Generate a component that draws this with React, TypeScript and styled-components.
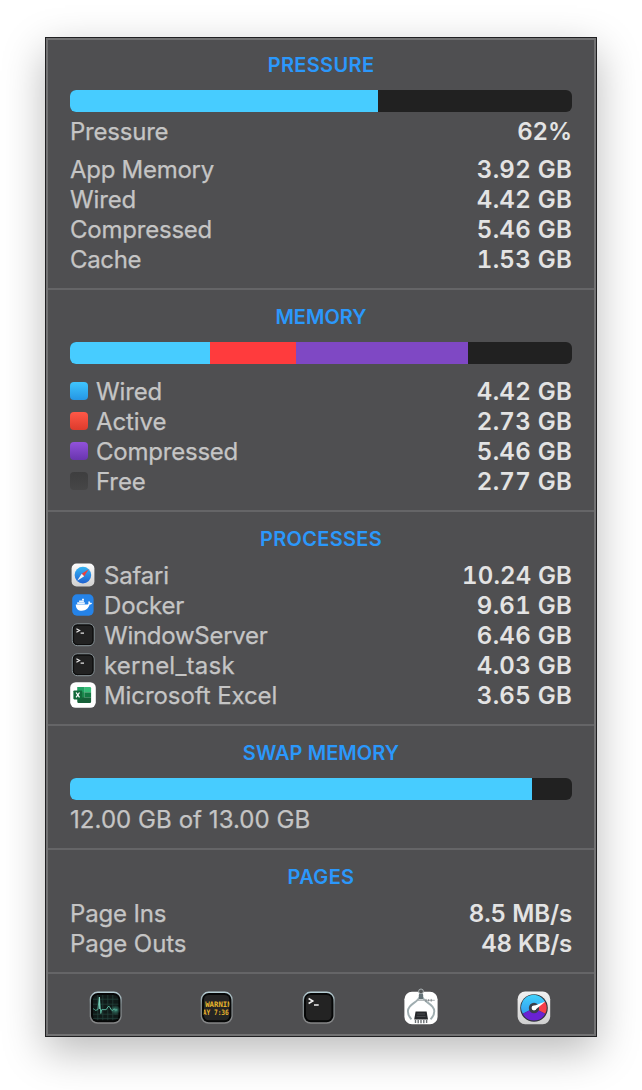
import React from 'react';
import styled, { createGlobalStyle } from 'styled-components';

const GlobalStyle = createGlobalStyle`
  body {
    margin: 0;
    background: #fff;
    font-family: Inter, 'Liberation Sans', sans-serif;
  }
`;

const Page = styled.main`
  box-sizing: border-box;
  width: 642px;
  height: 1090px;
  padding: 37px 45px 53px;
  overflow: hidden;
`;

const Panel = styled.div`
  box-sizing: border-box;
  width: 552px;
  height: 1000px;
  border: 1px solid #202022;
  background: #4f4f51;
  box-shadow: 0 14px 40px rgba(0, 0, 0, 0.28);
`;

const PanelInner = styled.div`
  box-sizing: border-box;
  height: 100%;
  border: 2px solid #727273;
`;

const Section = styled.section<{ $first?: boolean }>`
  padding: ${(p) => (p.$first ? 10 : 12)}px 22px 14px;
  border-bottom: 2px solid #656567;
`;

const Title = styled.h2<{ $tracking: number }>`
  margin: 0;
  font-size: 20px;
  line-height: 30px;
  font-weight: 600;
  letter-spacing: ${(p) => p.$tracking}px;
  text-align: center;
  color: #2b98fb;
`;

const Bar = styled.div<{ $after: number }>`
  display: flex;
  height: 22px;
  margin: 10px 0 ${(p) => p.$after}px;
  border-radius: 6px;
  overflow: hidden;
  background: #212121;
`;

const Segment = styled.div<{ $color: string }>`
  height: 100%;
  background: ${(p) => p.$color};
`;

const Rows = styled.div<{ $before?: number }>`
  margin-top: ${(p) => p.$before ?? 0}px;
`;

const Row = styled.div`
  display: flex;
  align-items: center;
  gap: 8px;
  height: 30px;
  font-size: 24px;
  line-height: 30px;
  white-space: nowrap;
`;

const Label = styled.span<{ $tracking?: number }>`
  flex: 1;
  padding-top: 2px;
  color: #c5c5c5;
  -webkit-text-stroke: 0.25px #c5c5c5;
  letter-spacing: ${(p) => p.$tracking ?? 0}px;
`;

const Value = styled.span<{ $tracking?: number }>`
  padding-top: 2px;
  color: #e3e3e3;
  font-weight: 600;
  font-variant-numeric: tabular-nums;
  letter-spacing: ${(p) => p.$tracking ?? 0.27}px;
`;

const Swatch = styled.i<{ $from: string; $to: string }>`
  width: 18px;
  height: 18px;
  border-radius: 4px;
  background: linear-gradient(${(p) => p.$from}, ${(p) => p.$to});
`;

const Footer = styled.footer`
  display: grid;
  grid-template-columns: 111px 102px 102px 113px 34px;
  padding: 17px 0 0 41px;
`;

const Icon = styled.svg<{ $size: number }>`
  display: block;
  flex: none;
  width: ${(p) => p.$size}px;
  height: ${(p) => p.$size}px;
  overflow: visible;
`;

const SafariIcon = () => (
  <Icon $size={26} viewBox="0 0 26 26">
    <defs>
      <linearGradient id="sfBg" x1="0" y1="0" x2="0" y2="1">
        <stop offset="0" stopColor="#fdfdfd" />
        <stop offset="1" stopColor="#cfcfcf" />
      </linearGradient>
      <linearGradient id="sfDial" x1="0" y1="0" x2="0" y2="1">
        <stop offset="0" stopColor="#35b4f3" />
        <stop offset="1" stopColor="#1f62d2" />
      </linearGradient>
    </defs>
    <rect x="1.6" y="1.6" width="22.8" height="22.8" rx="5" fill="url(#sfBg)" />
    <circle cx="12.9" cy="13.1" r="8.3" fill="url(#sfDial)" />
    <path d="M18.6 7.2 11.7 11.7 14.2 14.3Z" fill="#ee3f3a" />
    <path d="M7.2 18.7 11.7 11.7 14.2 14.3Z" fill="#f4f4f4" />
  </Icon>
);

const DockerIcon = () => (
  <Icon $size={26} viewBox="0 0 26 26">
    <rect x="2.2" y="2.3" width="21.4" height="21.4" rx="4.8" fill="#2583e8" />
    <path
      d="M5.8 12.5H17c1 0 1.5-.5 1.5-1.3-.4-1-.1-1.8.5-2.3.7.5 1 1.2 1 1.9.8-.1 1.5 0 2 .4-.5 1-1.3 1.4-2.4 1.4-1.2 3.9-3.7 6.2-7.8 6.2-3.7 0-6-2.1-6-6.3Z"
      fill="#fff"
    />
    <path d="M7.2 10.2h7.6v2H7.2zM9.1 8.5h4.8v1.4H9.1zM12 6.7h2v1.5h-2z" fill="#e8f3ff" />
  </Icon>
);

const TerminalSmallIcon = () => (
  <Icon $size={26} viewBox="0 0 26 26">
    <rect x="2.3" y="1.9" width="21.8" height="21.8" rx="5" fill="#1f1f1f" stroke="#89959a" strokeWidth="1" />
    <rect x="3.5" y="3.1" width="19.4" height="19.4" rx="4" fill="#222" stroke="#0e0e0e" strokeWidth="1.2" />
    <path d="M6.4 6.8 9.6 8.5 6.4 10.2M10.6 11.2h3.4" fill="none" stroke="#e8e8e8" strokeWidth="1.2" />
  </Icon>
);

const ExcelIcon = () => (
  <Icon $size={26} viewBox="0 0 26 26">
    <rect x="0.2" y="0.2" width="25.6" height="25.6" rx="5.6" fill="#fff" />
    <path d="M7.5 5h6.8v16H8.7a1.2 1.2 0 0 1-1.2-1.2Z" fill="#1d8a4d" />
    <path d="M14.3 5h5.6a1.2 1.2 0 0 1 1.2 1.2v4.1h-6.8Z" fill="#36bd78" />
    <path d="M7.5 5h6.8v5.3H7.5Z" fill="#22a263" />
    <path d="M14.3 10.3h6.8v5.3h-6.8Z" fill="#127a43" />
    <path d="M7.5 15.6h13.6v4.2a1.2 1.2 0 0 1-1.2 1.2H8.7a1.2 1.2 0 0 1-1.2-1.2Z" fill="#176038" />
    <rect x="3.4" y="8.5" width="8.8" height="8.9" rx="0.8" fill="#12693a" />
    <path d="M6.1 10.5l3.4 4.9M9.5 10.5l-3.4 4.9" stroke="#fff" strokeWidth="1.3" />
  </Icon>
);

const DarkTile = ({ fill }: { fill: string }) => (
  <>
    <rect x="0.7" y="0.6" width="32" height="32.2" rx="8" fill="url(#rim)" />
    <rect x="2" y="1.9" width="29.4" height="29.4" rx="6.8" fill="#060707" />
    <rect x="4" y="3.9" width="25.4" height="25.4" rx="4.8" fill={fill} />
  </>
);

const ActivityIcon = () => (
  <Icon $size={34} viewBox="0 0 34 34">
    <defs>
      <linearGradient id="rim" x1="0" y1="0" x2="0" y2="1">
        <stop offset="0" stopColor="#bad2d9" />
        <stop offset="0.4" stopColor="#7e898c" />
        <stop offset="1" stopColor="#858586" />
      </linearGradient>
      <radialGradient id="glow">
        <stop offset="0" stopColor="#4fb99f" stopOpacity="0.7" />
        <stop offset="1" stopColor="#4fb99f" stopOpacity="0" />
      </radialGradient>
    </defs>
    <DarkTile fill="#101a19" />
    <path
      d="M8.8 4v25.2M13.8 4v25.2M18.8 4v25.2M23.8 4v25.2M4 8.2h25.4M4 13.2h25.4M4 23.2h25.4M4 27.4h25.4"
      stroke="#25453f"
      strokeWidth="0.7"
    />
    <circle cx="26.5" cy="19" r="5" fill="url(#glow)" />
    <path
      d="M4.2 17.8c1.3 0 1.3 1.5 2.4 1.5s1.4-.7 2.3-.7L10.4 6l1.4 16.5 .9-3.9 4.5.1 1.8-3 1.2-.4 2.2 3.7 1.1.6 1.4-1.8 1.5 1.1h2"
      fill="none"
      stroke="#56ad97"
      strokeWidth="1"
      strokeLinejoin="round"
    />
    <path d="M10.4 6v12" stroke="#8fe0cc" strokeWidth="0.9" />
  </Icon>
);

const LedText = styled.text`
  font: 700 7.4px 'DejaVu Sans Mono', monospace;
  fill: #e6b42c;
`;

const ConsoleIcon = () => (
  <Icon $size={34} viewBox="0 0 34 34">
    <defs>
      <clipPath id="screen">
        <rect x="3.6" y="3.9" width="26" height="25.4" rx="3" />
      </clipPath>
    </defs>
    <DarkTile fill="#242424" />
    <g clipPath="url(#screen)">
      <LedText x="5.2" y="15.6" textLength="26.4" lengthAdjust="spacingAndGlyphs">WARNIN</LedText>
      <LedText x="2.8" y="24.4" textLength="26" lengthAdjust="spacingAndGlyphs">AY 7:36</LedText>
    </g>
  </Icon>
);

const TerminalIcon = () => (
  <Icon $size={34} viewBox="0 0 34 34">
    <DarkTile fill="#232323" />
    <path d="M6.6 7.5 10.8 10 6.6 12.5M12 14h4.7" fill="none" stroke="#f1f1f1" strokeWidth="1.5" />
  </Icon>
);

const SystemInfoIcon = () => (
  <Icon $size={34} viewBox="0 0 34 34">
    <rect x="0.4" y="0.7" width="33.2" height="32.6" rx="7.6" fill="#fff" />
    <circle cx="17" cy="0.4" r="2.4" fill="#55595a" stroke="#aeb3b5" strokeWidth="1" />
    <path
      d="M15.2 6.5C13.6 12 3.9 12.6 3.9 20.2c0 3.4 1.5 6 3.6 8M18.8 6.5C20.4 12 30.3 12.6 30.3 20.2c0 3.4-1.6 6-3.8 8"
      fill="none"
      stroke="#9fadb0"
      strokeWidth="1.9"
    />
    <path d="M12.5 9.3h18.3" stroke="#a5adb0" strokeWidth="1" />
    <path d="M22 7.9v2.8M24.6 8.2v2.2M27.2 7.9v2.8" stroke="#71777b" strokeWidth="0.8" />
    <rect x="14.8" y="2.8" width="4.4" height="5.4" rx="1.2" fill="#647277" />
    <path d="M11.6 20.6h11l1.4 7.8H10.2Z" fill="#26282b" />
    <path d="M13.2 23h7.8M12.6 25.4h9" stroke="#54575a" strokeWidth="0.8" />
    <path d="M11.5 28.9v3M14.2 28.9v3.4M17 28.9v3.4M19.8 28.9v3.4M22.6 28.9v3" stroke="#6c7174" strokeWidth="1.4" />
  </Icon>
);

const GaugeIcon = () => (
  <Icon $size={34} viewBox="0 0 34 34">
    <defs>
      <linearGradient id="gBg" x1="0" y1="0" x2="0" y2="1">
        <stop offset="0" stopColor="#f2f2f2" />
        <stop offset="1" stopColor="#cfcfcf" />
      </linearGradient>
      <linearGradient id="gTop" x1="0" y1="0" x2="0" y2="1">
        <stop offset="0" stopColor="#42d2fc" />
        <stop offset="1" stopColor="#329dee" />
      </linearGradient>
    </defs>
    <rect x="0.6" y="0.6" width="32.6" height="32.6" rx="7.6" fill="url(#gBg)" />
    <circle cx="17" cy="17" r="13.8" fill="#30343b" />
    <path d="M17 17 5.8 22.7A12.6 12.6 0 1 1 28 10.8Z" fill="url(#gTop)" />
    <path d="M17 17 28 10.8A12.6 12.6 0 0 1 28.2 22.7Z" fill="#f63e49" />
    <path d="M17 17 28.2 22.7A12.6 12.6 0 0 1 5.8 22.7Z" fill="#6a22d2" />
    <circle cx="17" cy="17" r="5.2" fill="#3a3e49" />
    <path d="M28.4 10.4 16 15.2 18 19Z" fill="#fff" />
    <circle cx="17" cy="17" r="2.4" fill="#fff" />
  </Icon>
);

interface Stat {
  label: string;
  value: string;
  labelTracking?: number;
  valueTracking?: number;
}

const pressureStats: Stat[] = [
  { label: 'App Memory', value: '3.92 GB', labelTracking: -0.28 },
  { label: 'Wired', value: '4.42 GB', labelTracking: -0.12 },
  { label: 'Compressed', value: '5.46 GB', labelTracking: -0.22 },
  { label: 'Cache', value: '1.53 GB', labelTracking: -0.35 },
];

const memoryStats = [
  { label: 'Wired', value: '4.42 GB', labelTracking: -0.12, from: '#3fc5fe', to: '#2596e4' },
  { label: 'Active', value: '2.73 GB', labelTracking: -0.1, from: '#ff5847', to: '#dd3b2c' },
  { label: 'Compressed', value: '5.46 GB', labelTracking: -0.22, from: '#9152db', to: '#6935ae' },
  { label: 'Free', value: '2.77 GB', labelTracking: -0.1, from: '#3e3e3f', to: '#464647' },
];

const memorySegments = [
  { width: 140, color: '#47ccff' },
  { width: 86, color: '#ff3b3d' },
  { width: 172, color: '#7f48c4' },
];

const processes = [
  { label: 'Safari', value: '10.24 GB', labelTracking: -0.2, valueTracking: 0.14, icon: <SafariIcon /> },
  { label: 'Docker', value: '9.61 GB', labelTracking: -0.15, icon: <DockerIcon /> },
  { label: 'WindowServer', value: '6.46 GB', labelTracking: -0.27, icon: <TerminalSmallIcon /> },
  { label: 'kernel_task', value: '4.03 GB', labelTracking: 0.23, icon: <TerminalSmallIcon /> },
  { label: 'Microsoft Excel', value: '3.65 GB', labelTracking: -0.08, icon: <ExcelIcon /> },
];

const pages: Stat[] = [
  { label: 'Page Ins', value: '8.5 MB/s', labelTracking: -0.15, valueTracking: -0.13 },
  { label: 'Page Outs', value: '48 KB/s', labelTracking: -0.08, valueTracking: -0.25 },
];

const StatRow = ({ label, value, labelTracking, valueTracking, icon }: Stat & { icon?: React.ReactNode }) => (
  <Row>
    {icon}
    <Label $tracking={labelTracking}>{label}</Label>
    <Value $tracking={valueTracking}>{value}</Value>
  </Row>
);

export default function App() {
  return (
    <Page>
      <GlobalStyle />
      <Panel>
        <PanelInner>
          <Section $first>
            <Title $tracking={0.35}>PRESSURE</Title>
            <Bar $after={4}>
              <Segment $color="#47ccff" style={{ width: 308 }} />
            </Bar>
            <StatRow label="Pressure" value="62%" labelTracking={-0.22} valueTracking={-0.1} />
            <Rows $before={8}>
              {pressureStats.map((s) => (
                <StatRow key={s.label} {...s} />
              ))}
            </Rows>
          </Section>
          <Section>
            <Title $tracking={0}>MEMORY</Title>
            <Bar $after={12}>
              {memorySegments.map((s) => (
                <Segment key={s.color} $color={s.color} style={{ width: s.width }} />
              ))}
            </Bar>
            {memoryStats.map(({ from, to, ...stat }) => (
              <StatRow key={stat.label} {...stat} icon={<Swatch $from={from} $to={to} />} />
            ))}
          </Section>
          <Section>
            <Title $tracking={0.3}>PROCESSES</Title>
            <Rows $before={6}>
              {processes.map((s) => (
                <StatRow key={s.label} {...s} />
              ))}
            </Rows>
          </Section>
          <Section>
            <Title $tracking={0.06}>SWAP MEMORY</Title>
            <Bar $after={4}>
              <Segment $color="#47ccff" style={{ width: 462 }} />
            </Bar>
            <Row>
              <Label $tracking={0.06}>12.00 GB of 13.00 GB</Label>
            </Row>
          </Section>
          <Section>
            <Title $tracking={0.35}>PAGES</Title>
            <Rows $before={6}>
              {pages.map((s) => (
                <StatRow key={s.label} {...s} />
              ))}
            </Rows>
          </Section>
          <Footer>
            <ActivityIcon />
            <ConsoleIcon />
            <TerminalIcon />
            <SystemInfoIcon />
            <GaugeIcon />
          </Footer>
        </PanelInner>
      </Panel>
    </Page>
  );
}
